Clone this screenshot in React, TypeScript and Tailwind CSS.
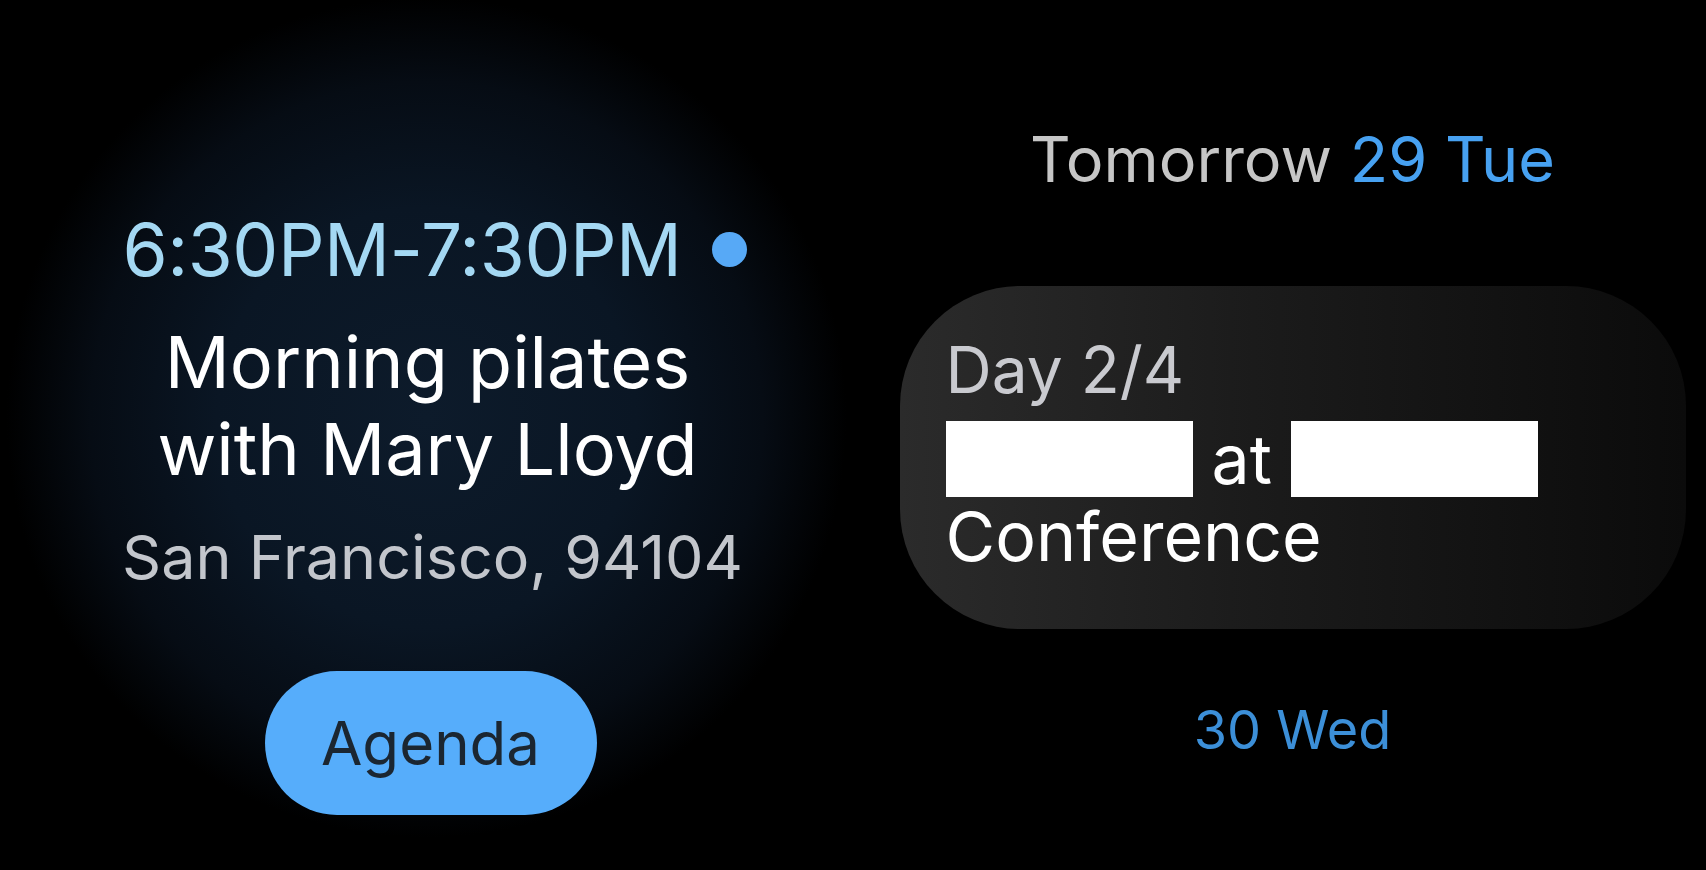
export default function App() {
  return (
    <div
      className="w-[1706px] h-[870px] overflow-hidden bg-black flex"
      style={{ fontFamily: "Inter, 'Noto Sans', sans-serif" }}
    >
      {/* event detail */}
      <div className="w-[853px] h-full flex flex-col items-center pt-[213px] pl-[16px] bg-[radial-gradient(circle_420px_at_50%_48%,#0d1b2b_0%,#0a1624_50%,#060c14_80%,#000_100%)]">
        <div className="flex items-center h-[72px]">
          <span className="text-[73px] leading-none text-[#a4d8f3] tracking-[-0.5px]">6:30PM-7:30PM</span>
          <span className="ml-[30px] w-[35px] h-[35px] rounded-full bg-[#57a9f6]" />
        </div>
        <div className="mt-[33px] -ml-[14px] text-center text-white text-[72px] leading-[87px]">
          Morning pilates
          <br />
          with Mary Lloyd
        </div>
        <div className="mt-[35px] -ml-[4px] text-[61px] leading-none text-[#c3c6cc]">San Francisco, 94104</div>
        <button className="mt-[83px] -ml-[8px] w-[332px] h-[144px] rounded-full bg-[#56adfb] text-[#1b2631] text-[60px] leading-none">
          Agenda
        </button>
      </div>

      {/* agenda list */}
      <div className="flex-1 h-full flex flex-col items-center pl-[26px]">
        <div className="-mt-[44px] h-[52px] text-[50px] leading-none text-[#2a2a2a]">Conference</div>
        <div className="mt-[120px] text-[63px] leading-none text-[#c6c6c6]">
          Tomorrow <span className="text-[#47a1f1]">29 Tue</span>
        </div>
        <div className="mt-[95px] w-[786px] h-[343px] rounded-[120px] bg-[linear-gradient(90deg,#2b2b2b_0%,#1b1b1b_45%,#0b0b0b_100%)] pl-[46px] pt-[52px] flex flex-col">
          <div className="text-[64px] leading-none text-[#c9cacf]">Day 2/4</div>
          <div className="mt-[19px] flex items-center h-[76px]">
            <div className="w-[247px] h-[76px] bg-white" />
            <span className="mx-[19px] text-[68px] leading-none text-white">at</span>
            <div className="w-[247px] h-[76px] bg-white" />
          </div>
          <div className="mt-[5px] text-[68px] leading-none text-white">Conference</div>
        </div>
        <div className="mt-[74px] text-[54px] leading-none text-[#3c8fd8]">30 Wed</div>
      </div>
    </div>
  );
}
